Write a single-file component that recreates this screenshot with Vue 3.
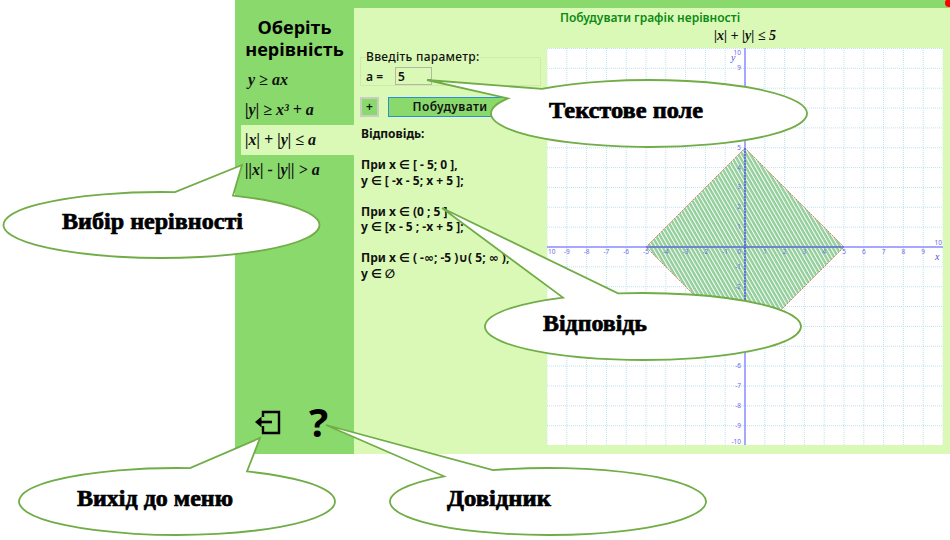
<template>
  <div class="page">
    <div class="window">
      <span class="close-dot"></span>
      <div class="topbar"></div>
      <div class="body">
        <aside class="sidebar">
          <h1 class="side-title">Оберіть<br />нерівність</h1>
          <ul class="menu">
            <li v-for="(item, i) in menu" :key="item" class="menu-item" :class="{ active: i === 2 }">{{ item }}</li>
          </ul>
          <div class="side-icons">
            <svg class="exit-icon" width="28" height="28" viewBox="0 0 28 28">
              <path d="M10 9V4H26V25H10V18" fill="none" stroke="#000" stroke-width="2.400" />
              <path d="M19 14H7" fill="none" stroke="#000" stroke-width="2.600" />
              <path d="M2 14L8.500 8.500V19.500Z" fill="#000" />
            </svg>
            <span class="help">?</span>
          </div>
        </aside>
        <main class="main">
          <div class="heading">Побудувати графік нерівності</div>
          <div class="columns">
            <section class="left">
              <fieldset class="params">
                <legend>Введіть параметр:</legend>
                <label class="param-row">
                  <span class="param-name">a =</span>
                  <input class="param-input" value="5" />
                </label>
              </fieldset>
              <div class="buttons">
                <button class="plus">+</button>
                <button class="build">Побудувати</button>
              </div>
              <p class="answer">{{ answer }}</p>
            </section>
            <section class="right">
              <div class="formula">|x| + |y| ≤ 5</div>
              <svg class="graph" width="396" height="397" viewBox="547 48 396 397">
                <defs>
                  <pattern id="hatch" width="3.500" height="8" patternUnits="userSpaceOnUse" patternTransform="rotate(-30)">
                    <rect width="3.500" height="8" fill="#93cf9b" />
                    <rect width="1" height="8" fill="#fff" />
                  </pattern>
                </defs>
                <rect x="547" y="48" width="396" height="397" fill="#fff" />
                <g stroke="#bfe2ee" stroke-width="1" stroke-dasharray="1 1">
                  <line v-for="n in ticks" :key="'v' + n" :x1="px(n)" y1="48" :x2="px(n)" y2="445" />
                  <line v-for="n in ticks" :key="'h' + n" x1="547" :y1="py(n)" x2="943" :y2="py(n)" />
                </g>
                <path d="M745 148L844 247L745 346L646 247Z" fill="url(#hatch)" stroke="#e0806a" stroke-width="1" stroke-dasharray="2 1" />
                <line x1="547" y1="247" x2="943" y2="247" stroke="#8d8dff" stroke-width="1.500" />
                <line x1="745" y1="48" x2="745" y2="445" stroke="#8d8dff" stroke-width="1.500" />
                <line x1="646" y1="247" x2="844" y2="247" stroke="#4a6ab0" stroke-width="1.200" />
                <line x1="745" y1="148" x2="745" y2="346" stroke="#3f5fb0" stroke-width="1.200" stroke-dasharray="2 1" />
                <g class="tick-labels">
                  <text v-for="n in inner" :key="'x' + n" :x="px(n)" y="254" text-anchor="middle">{{ n }}</text>
                  <text v-for="n in inner" :key="'y' + n" x="741" :y="py(n) + 2" text-anchor="end">{{ n }}</text>
                  <text x="741" y="254" text-anchor="end">0</text>
                  <text x="548" y="254">10</text>
                  <text x="942" y="245" text-anchor="end">10</text>
                  <text x="741" y="55" text-anchor="end">10</text>
                  <text x="741" y="444" text-anchor="end">-10</text>
                </g>
                <text class="axis-name" x="731" y="61">y</text>
                <text class="axis-name" x="935" y="260">x</text>
              </svg>
            </section>
          </div>
        </main>
      </div>
    </div>

    <!-- callouts lie over the window -->
    <svg class="callouts" width="950" height="540" viewBox="0 0 950 540">
      <path v-for="c in callouts" :key="c.text" class="balloon" :d="balloon(c)" />
      <text v-for="c in callouts" :key="c.text + 't'" class="callout-text" :x="c.tx" :y="c.ty" :textLength="c.tw" lengthAdjust="spacingAndGlyphs">{{ c.text }}</text>
    </svg>
  </div>
</template>

<script setup>
const menu = ['y ≥ ax', '|y| ≥ x³ + a', '|x| + |y| ≤ a', '||x| - |y|| > a']

const answer = `Відповідь:

При x ∈ [ - 5; 0 ],
y ∈ [ -x - 5; x + 5 ];

При x ∈ (0 ; 5 ]
y ∈ [x - 5 ; -x + 5 ];

При x ∈ ( -∞; -5 )∪( 5; ∞ ),
y ∈ ∅`

const ticks = Array.from({ length: 21 }, (_, i) => i - 10)
const inner = ticks.filter((n) => n !== 0 && Math.abs(n) < 10)

const px = (n) => 745 + n * 19.8
const py = (n) => 247 - n * 19.85

// tail joins the top of the ellipse between x1 (right) and x2 (left)
const callouts = [
  { text: 'Текстове поле', cx: 649, cy: 113.5, ry: 33.5, tip: [427, 80], x1: 542, x2: 508, tx: 549, ty: 118, tw: 154 },
  { text: 'Вибір нерівності', cx: 161.5, cy: 225, ry: 33, tip: [242, 165], x1: 233, x2: 175, tx: 62, ty: 229, tw: 181 },
  { text: 'Відповідь', cx: 643, cy: 326.5, ry: 33.5, tip: [442, 208], x1: 618, x2: 563, tx: 543, ty: 331, tw: 104 },
  { text: 'Вихід до меню', cx: 177, cy: 501.5, ry: 33.5, tip: [260, 438], x1: 247, x2: 190, tx: 77, ty: 506, tw: 156 },
  { text: 'Довідник', cx: 548, cy: 501.5, ry: 33.5, tip: [326, 425], x1: 493, x2: 444, tx: 447, ty: 506, tw: 104 },
]

const balloon = ({ cx, cy, ry, tip, x1, x2 }) => {
  const rx = 158
  const top = (x) => cy - ry * Math.sqrt(1 - ((x - cx) / rx) ** 2)
  return `M${tip[0]} ${tip[1]}L${x1} ${top(x1)}A${rx} ${ry} 0 1 1 ${x2} ${top(x2)}Z`
}
</script>

<style>
html,
body {
  background: #fff;
}
</style>

<style scoped>
.page {
  position: relative;
  width: 950px;
  height: 540px;
  padding-left: 235px;
  box-sizing: border-box;
  overflow: hidden;
  font-family: "Noto Sans", "DejaVu Sans", sans-serif;
}

.window {
  position: relative;
  width: 715px;
  height: 454px;
  display: flex;
  flex-direction: column;
  background: #dbf9b6;
}

.close-dot {
  position: absolute;
  top: -1px;
  right: -3px;
  width: 8px;
  height: 8px;
  border-radius: 50%;
  background: #f00;
}

.topbar {
  height: 8px;
  background: #89d96d;
}

.body {
  flex: 1;
  display: flex;
  min-height: 0;
}

.sidebar {
  width: 119px;
  display: flex;
  flex-direction: column;
  background: #89d96d;
}

.side-title {
  margin: 8px 0 5px;
  font: 700 18px/22px "Open Sans", sans-serif;
  text-align: center;
  color: #000;
}

.menu {
  list-style: none;
  margin: 0;
  padding: 0;
}

.menu-item {
  height: 30px;
  margin-left: 6px;
  padding-left: 4px;
  font: italic 700 16px/30px "Liberation Serif", serif;
  color: #111;
}

.menu-item:first-child {
  padding-left: 7px;
}

.menu-item.active {
  background: #dbf9b6;
}

.side-icons {
  margin-top: auto;
  padding: 0 0 18px 18px;
  display: flex;
  align-items: center;
  gap: 28px;
}

.help {
  font: 700 40px/28px "Noto Sans", sans-serif;
  color: #000;
}

.main {
  flex: 1;
  display: flex;
  flex-direction: column;
  min-width: 0;
}

.heading {
  height: 18px;
  padding-left: 206px;
  font-size: 12px;
  font-weight: 600;
  line-height: 20px;
  color: #0b8a14;
}

.columns {
  flex: 1;
  display: flex;
}

.left {
  width: 193px;
  box-sizing: border-box;
  padding: 25px 6px 0;
}

.params {
  margin: 0;
  padding: 4px 5px 5px;
  height: 35px;
  box-sizing: border-box;
  border: 1px solid #cfeaab;
}

.params legend {
  padding: 0;
  font-size: 12px;
  font-weight: 500;
  line-height: 12px;
  letter-spacing: 0.3px;
  color: #111;
}

.param-row {
  display: flex;
  align-items: center;
  font-size: 12px;
  font-weight: 600;
  color: #111;
}

.param-name {
  width: 29px;
}

.param-input {
  width: 37px;
  height: 18px;
  box-sizing: border-box;
  padding: 0 2px;
  border: 1px solid #b5b8a0;
  background: #dbf9b6;
  font: 600 12px "Noto Sans", sans-serif;
  color: #111;
}

.buttons {
  display: flex;
  gap: 9px;
  margin-top: 11px;
}

.plus,
.build {
  height: 20px;
  padding: 0;
  font: 600 12px/16px "Noto Sans", sans-serif;
  color: #111;
  background: #89d96d;
}

.plus {
  width: 19px;
  border: 2px solid #c8cdc0;
}

.build {
  width: 124px;
  border: 1px solid #2a8fd8;
  letter-spacing: 0.4px;
}

.answer {
  margin: 9px 0 0 1px;
  white-space: pre-line;
  font-size: 12px;
  font-weight: 700;
  line-height: 15.500px;
  color: #111;
}

.right {
  flex: 1;
  display: flex;
  flex-direction: column;
}

.formula {
  width: 396px;
  height: 22px;
  font: italic 700 14px/20px "Liberation Serif", serif;
  text-align: center;
  color: #111;
}

.graph {
  display: block;
}

.tick-labels text {
  font: 6.500px "Noto Sans", sans-serif;
  fill: #6a6af0;
}

.axis-name {
  font: italic 10px "Liberation Serif", serif;
  fill: #5050e0;
}

.callouts {
  position: absolute;
  inset: 0;
  pointer-events: none;
}

.balloon {
  fill: #fff;
  stroke: #70ad47;
  stroke-width: 1.800px;
}

.callout-text {
  font: 700 24px "Liberation Serif", serif;
  fill: #000;
  stroke: #000;
  stroke-width: 0.700px;
}
</style>
